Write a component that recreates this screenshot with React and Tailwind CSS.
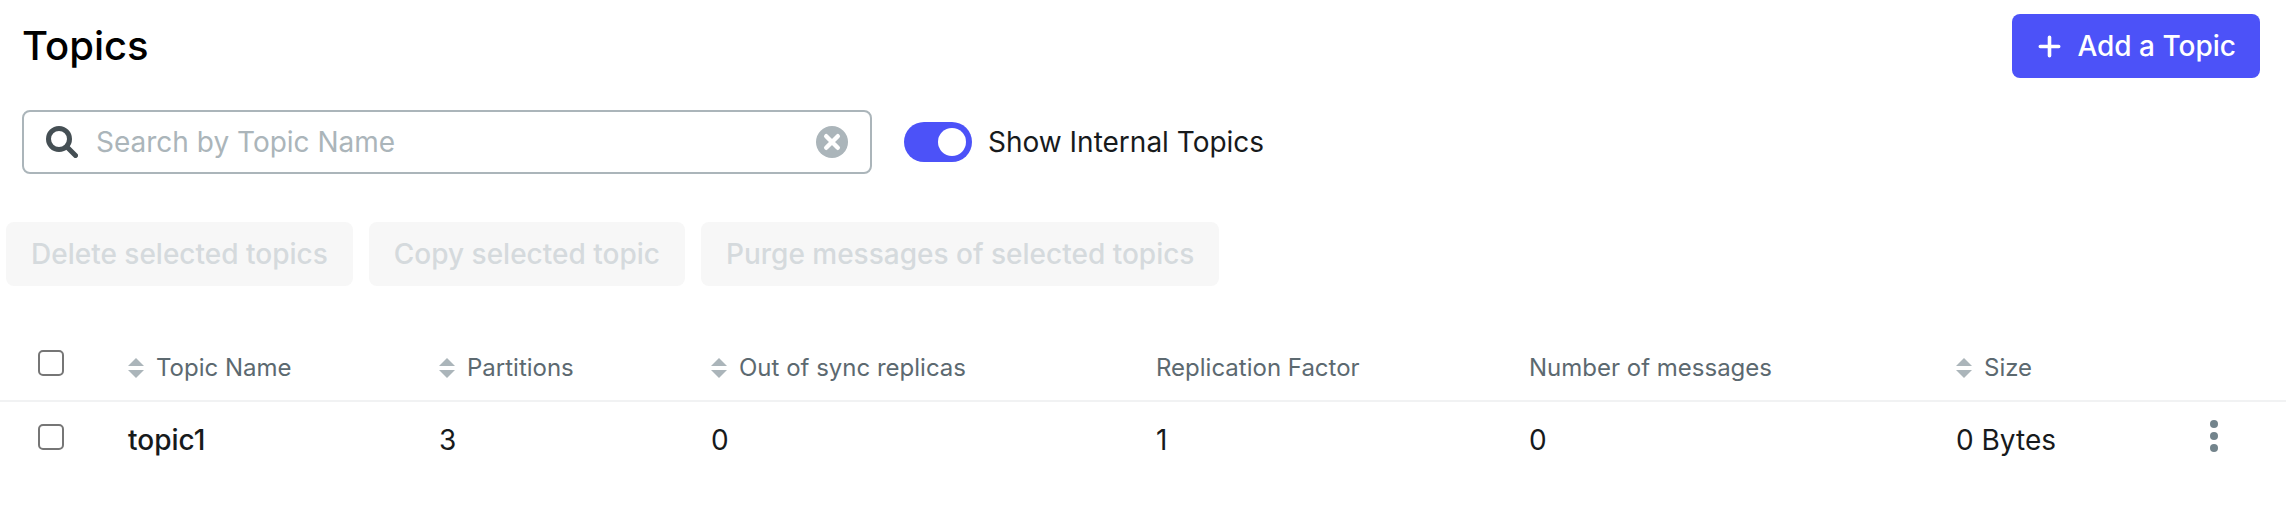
import { useState } from "react";

const columns = [
  { label: "Topic Name", sortable: true },
  { label: "Partitions", sortable: true },
  { label: "Out of sync replicas", sortable: true },
  { label: "Replication Factor", sortable: false },
  { label: "Number of messages", sortable: false },
  { label: "Size", sortable: true },
];

const topics = [
  { name: "topic1", partitions: 3, outOfSync: 0, replication: 1, messages: 0, size: "0 Bytes" },
];

const bulkActions = [
  "Delete selected topics",
  "Copy selected topic",
  "Purge messages of selected topics",
];

function PlusIcon() {
  return (
    <svg className="size-[27px]" viewBox="0 0 27 27" fill="none" stroke="currentColor" strokeWidth="3.6" strokeLinecap="round" aria-hidden="true">
      <path d="M13.5 4.3v18.4M4.3 13.5h18.4" />
    </svg>
  );
}

function SearchIcon() {
  return (
    <svg className="size-8 shrink-0 text-[#454f54]" viewBox="0 0 32 32" fill="none" stroke="currentColor" strokeWidth="5" strokeLinecap="round" aria-hidden="true">
      <circle cx="13" cy="13" r="10.5" />
      <path d="M21 21l8.5 8.5" />
    </svg>
  );
}

function ClearIcon() {
  return (
    <svg className="size-8" viewBox="0 0 32 32" aria-hidden="true">
      <circle cx="16" cy="16" r="16" fill="#abb5ba" />
      <path d="M10.2 10.2l11.6 11.6M21.8 10.2L10.2 21.8" stroke="#fff" strokeWidth="4.4" strokeLinecap="round" />
    </svg>
  );
}

function SortIcon() {
  return (
    <svg className="mr-3 inline h-5 w-4 align-[-2px]" viewBox="0 0 16 20" fill="#abb5ba" aria-hidden="true">
      <path d="M8 0l8 8H0zM8 20l-8-8h16z" />
    </svg>
  );
}

function DotsIcon() {
  return (
    <svg className="h-8 w-2" viewBox="0 0 8 32" fill="#73848c" aria-hidden="true">
      <circle cx="4" cy="4" r="4" />
      <circle cx="4" cy="16" r="4" />
      <circle cx="4" cy="28" r="4" />
    </svg>
  );
}

function Checkbox({ label }) {
  return (
    <input
      type="checkbox"
      aria-label={label}
      className="inline-block size-[26px] appearance-none rounded-[5px] border-2 border-[#767676] bg-white align-baseline checked:bg-[#4c52f8]"
    />
  );
}

export default function App() {
  const [query, setQuery] = useState("");
  const [internal, setInternal] = useState(true);

  return (
    <main className="bg-white font-['Inter',sans-serif] text-[28px] leading-10 text-[#171a1c]">
      <header className="flex items-center justify-between pt-3.5 pr-[26px] pl-[22px]">
        <h1 className="text-[40px] leading-[60px] font-medium text-black">Topics</h1>
        <button type="button" className="flex h-16 items-center gap-3.5 rounded-lg bg-[#4c52f8] px-6 font-medium text-white">
          <PlusIcon />
          Add a Topic
        </button>
      </header>

      <div className="flex items-center gap-8 px-[22px] pt-8">
        <div className="flex h-16 w-[850px] items-center gap-[18px] rounded-lg border-2 border-[#abb5ba] px-[22px]">
          <SearchIcon />
          <input
            type="text"
            aria-label="Search by Topic Name"
            placeholder="Search by Topic Name"
            value={query}
            onChange={(e) => setQuery(e.target.value)}
            className="min-w-0 flex-1 bg-transparent outline-none placeholder:text-[#abb5ba]"
          />
          <button type="button" aria-label="Clear search" onClick={() => setQuery("")}>
            <ClearIcon />
          </button>
        </div>
        <label className="flex items-center gap-4">
          <input
            type="checkbox"
            role="switch"
            checked={internal}
            onChange={(e) => setInternal(e.target.checked)}
            className="flex h-10 w-[68px] appearance-none items-center rounded-full bg-[#abb5ba] px-1.5 before:size-7 before:rounded-full before:bg-white checked:justify-end checked:bg-[#4c52f8]"
          />
          Show Internal Topics
        </label>
      </div>

      <div className="flex gap-4 px-1.5 pt-12">
        {bulkActions.map((action) => (
          <button key={action} type="button" disabled className="h-16 rounded-lg bg-[#f7f7f7] px-[25px] font-medium text-[#d5dadd]">
            {action}
          </button>
        ))}
      </div>

      <div className="overflow-x-auto pt-11">
        <table className="w-full table-fixed border-collapse text-left">
          <colgroup>
            <col className="w-[128px]" />
            <col className="w-[311px]" />
            <col className="w-[272px]" />
            <col className="w-[445px]" />
            <col className="w-[373px]" />
            <col className="w-[427px]" />
            <col className="w-[224px]" />
            <col className="w-[106px]" />
          </colgroup>
          <thead>
            <tr className="border-b-2 border-[#f1f2f3] align-baseline text-2xl leading-10 text-[#5c6970]">
              <th className="pt-[18px] pb-3 pl-[38px] font-normal">
                <Checkbox label="Select all topics" />
              </th>
              {columns.map(({ label, sortable }) => (
                <th key={label} className="pt-[18px] pb-3 font-normal">
                  {sortable ? (
                    <button type="button">
                      <SortIcon />
                      {label}
                    </button>
                  ) : (
                    label
                  )}
                </th>
              ))}
              <th aria-label="Actions" />
            </tr>
          </thead>
          <tbody>
            {topics.map((t) => (
              <tr key={t.name} className="align-baseline">
                <td className="pt-[18px] pb-4 pl-[38px]">
                  <Checkbox label={"Select " + t.name} />
                </td>
                <td className="pt-[18px] pb-4">
                  <a href="#topic1" className="font-medium">{t.name}</a>
                </td>
                <td className="pt-[18px] pb-4">{t.partitions}</td>
                <td className="pt-[18px] pb-4">{t.outOfSync}</td>
                <td className="pt-[18px] pb-4">{t.replication}</td>
                <td className="pt-[18px] pb-4">{t.messages}</td>
                <td className="pt-[18px] pb-4">{t.size}</td>
                <td className="pt-[18px] pb-4 pl-[22px] align-top">
                  <button type="button" aria-label={"Actions for " + t.name} className="flex px-2">
                    <DotsIcon />
                  </button>
                </td>
              </tr>
            ))}
          </tbody>
        </table>
      </div>
    </main>
  );
}
